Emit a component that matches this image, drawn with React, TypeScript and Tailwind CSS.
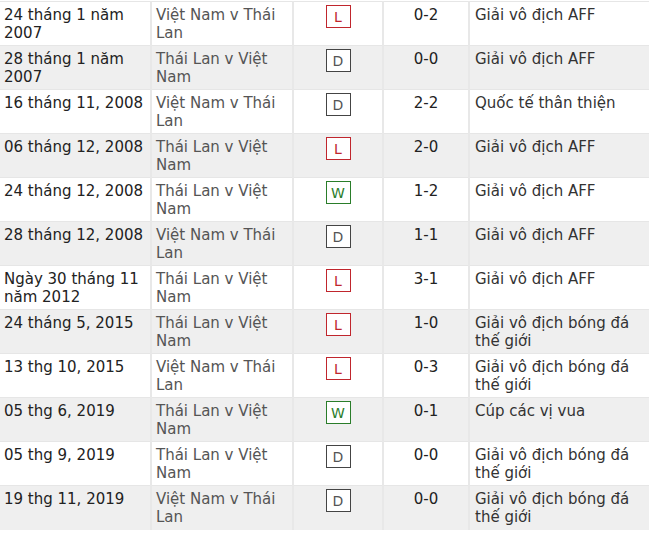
const rows: { date: string; match: string; res: "L" | "D" | "W"; score: string; comp: string }[] = [
  { date: "24 tháng 1 năm 2007", match: "Việt Nam v Thái Lan", res: "L", score: "0-2", comp: "Giải vô địch AFF" },
  { date: "28 tháng 1 năm 2007", match: "Thái Lan v Việt Nam", res: "D", score: "0-0", comp: "Giải vô địch AFF" },
  { date: "16 tháng 11, 2008", match: "Việt Nam v Thái Lan", res: "D", score: "2-2", comp: "Quốc tế thân thiện" },
  { date: "06 tháng 12, 2008", match: "Thái Lan v Việt Nam", res: "L", score: "2-0", comp: "Giải vô địch AFF" },
  { date: "24 tháng 12, 2008", match: "Thái Lan v Việt Nam", res: "W", score: "1-2", comp: "Giải vô địch AFF" },
  { date: "28 tháng 12, 2008", match: "Việt Nam v Thái Lan", res: "D", score: "1-1", comp: "Giải vô địch AFF" },
  { date: "Ngày 30 tháng 11 năm 2012", match: "Thái Lan v Việt Nam", res: "L", score: "3-1", comp: "Giải vô địch AFF" },
  { date: "24 tháng 5, 2015", match: "Thái Lan v Việt Nam", res: "L", score: "1-0", comp: "Giải vô địch bóng đá thế giới" },
  { date: "13 thg 10, 2015", match: "Việt Nam v Thái Lan", res: "L", score: "0-3", comp: "Giải vô địch bóng đá thế giới" },
  { date: "05 thg 6, 2019", match: "Thái Lan v Việt Nam", res: "W", score: "0-1", comp: "Cúp các vị vua" },
  { date: "05 thg 9, 2019", match: "Thái Lan v Việt Nam", res: "D", score: "0-0", comp: "Giải vô địch bóng đá thế giới" },
  { date: "19 thg 11, 2019", match: "Việt Nam v Thái Lan", res: "D", score: "0-0", comp: "Giải vô địch bóng đá thế giới" },
];

const badge = {
  L: "border-[#c0262d] text-[#c0262d]",
  D: "border-[#444] text-[#555]",
  W: "border-[#2a7d2a] text-[#2a7d2a]",
};

export default function App() {
  return (
    <div className="w-[649px] h-[534px] overflow-hidden bg-white pt-[1px]" style={{ fontFamily: "'DejaVu Sans', Verdana, sans-serif" }}>
      <table className="table-fixed border-collapse w-[649px] text-[15px] leading-[18px]">
        <colgroup>
          <col className="w-[151px]" />
          <col className="w-[142px]" />
          <col className="w-[90px]" />
          <col className="w-[86px]" />
          <col className="w-[180px]" />
        </colgroup>
        <tbody>
          {rows.map((r, i) => (
            <tr key={i} className={`h-[44px] border-t border-[#e6e6e6] ${i % 2 ? "bg-[#efefef]" : "bg-white"}`}>
              <td className="align-top pl-[4px] pr-1 pt-[4px] text-[#222] border-r-2 border-[#e8e8e8]">{r.date}</td>
              <td className="align-top pl-[4px] pr-1 pt-[4px] text-[#555] border-r-2 border-[#e8e8e8]">{r.match}</td>
              <td className="align-top pt-[3px] border-r-2 border-[#e8e8e8]">
                <div className="flex justify-center">
                  <span className={`flex items-center justify-center w-[25px] h-[23px] border bg-white text-[14px] ${badge[r.res]}`}>{r.res}</span>
                </div>
              </td>
              <td className="align-top pt-[4px] text-center text-[#222] border-r-2 border-[#e8e8e8]">{r.score}</td>
              <td className="align-top pl-[5px] pr-1 pt-[4px] text-[#333]">{r.comp}</td>
            </tr>
          ))}
        </tbody>
      </table>
    </div>
  );
}
